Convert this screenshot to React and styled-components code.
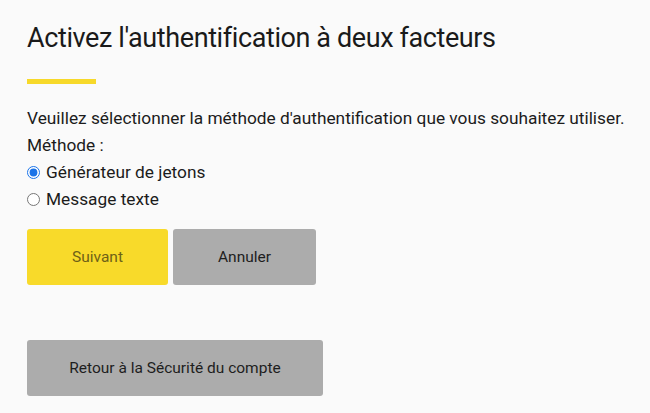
import React, { useState } from "react";
import styled, { createGlobalStyle } from "styled-components";

const Global = createGlobalStyle`
  html, body { margin: 0; padding: 0; background: #fafafa; }
  body { font-family: "Roboto", "Liberation Sans", sans-serif; color: #1c1c1c; }
`;

const Page = styled.div`
  padding: 18px 27px 0 27px;
  display: flex;
  flex-direction: column;
`;

const Title = styled.h1`
  margin: 0;
  font-weight: 400;
  font-size: 27px;
  letter-spacing: -0.4px;
  line-height: 40px;
  color: #1a1a1a;
`;

const Accent = styled.div`
  width: 69px;
  height: 5px;
  background: #f7d92a;
  margin-top: 21px;
  margin-bottom: 21px;
`;

const Text = styled.p`
  margin: 0;
  font-size: 17.3px;
  line-height: 27px;
  white-space: nowrap;
`;

const RadioRow = styled.label`
  display: flex;
  align-items: center;
  gap: 6px;
  font-size: 17.3px;
  line-height: 27px;
  cursor: pointer;
`;

const Radio = styled.input`
  margin: 0;
  width: 13px;
  height: 13px;
  accent-color: #1a73e8;
`;

const Buttons = styled.div`
  display: flex;
  gap: 5px;
  margin-top: 16px;
`;

const Button = styled.button`
  height: 56px;
  width: ${(p) => p.$w}px;
  border: none;
  border-radius: 3px;
  background: ${(p) => (p.$primary ? "#f8da2a" : "#acacac")};
  color: ${(p) => (p.$primary ? "#6e6117" : "#1e1e1e")};
  font-family: inherit;
  font-size: 15.5px;
  cursor: pointer;
`;

const Back = styled(Button)`
  margin-top: 55px;
`;

export default function App() {
  const [method, setMethod] = useState("token");
  return (
    <>
      <Global />
      <Page>
        <Title>Activez l'authentification à deux facteurs</Title>
        <Accent />
        <Text>Veuillez sélectionner la méthode d'authentification que vous souhaitez utiliser.</Text>
        <Text>Méthode :</Text>
        <RadioRow>
          <Radio type="radio" name="m" checked={method === "token"} onChange={() => setMethod("token")} />
          Générateur de jetons
        </RadioRow>
        <RadioRow>
          <Radio type="radio" name="m" checked={method === "sms"} onChange={() => setMethod("sms")} />
          Message texte
        </RadioRow>
        <Buttons>
          <Button $primary $w={141}>Suivant</Button>
          <Button $w={143}>Annuler</Button>
        </Buttons>
        <div>
          <Back $w={296}>Retour à la Sécurité du compte</Back>
        </div>
      </Page>
    </>
  );
}
